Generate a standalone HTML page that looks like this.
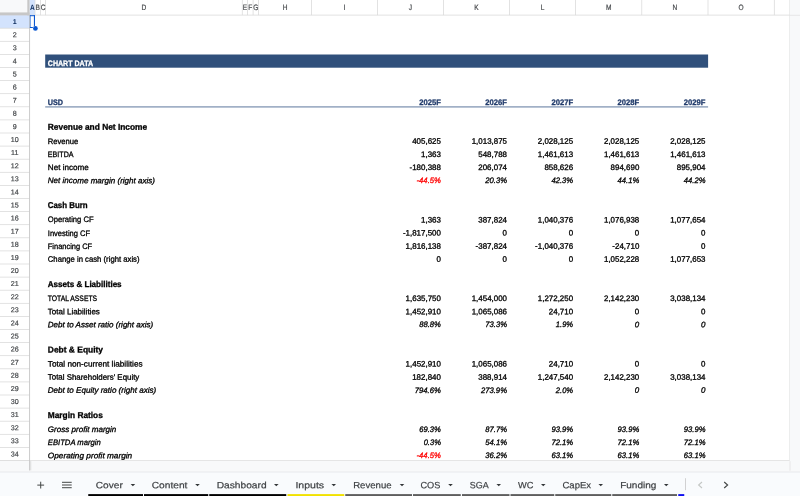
<!DOCTYPE html>
<html lang="en"><head><meta charset="utf-8"><title>Chart Data</title>
<style>html,body{margin:0;padding:0;background:#fff;overflow:hidden}svg{display:block;will-change:transform}text{white-space:pre;text-rendering:geometricPrecision}</style>
</head><body>
<svg width="800" height="496" viewBox="0 0 800 496" font-family="'Liberation Sans', Arial, sans-serif">
<rect x="0" y="0" width="800" height="496" fill="#ffffff"/>
<rect x="789.6" y="0" width="10.399999999999977" height="472.0" fill="#f8f9fa"/>
<rect x="789.3000000000001" y="0" width="0.7" height="472.0" fill="#e6e6e6"/>
<rect x="789.6" y="14.799999999999999" width="10.399999999999977" height="0.9" fill="#e4e4e4"/>
<rect x="0" y="460.5" width="800" height="11.5" fill="#f8f9fa"/>
<rect x="0" y="472.0" width="800" height="24.0" fill="#f9fbfd"/>
<rect x="0" y="471.6" width="800" height="0.8" fill="#e3e5e8"/>
<rect x="0" y="15.1" width="29.6" height="13.1" fill="#d3e3fd"/>
<rect x="29.6" y="0" width="5.399999999999999" height="15.1" fill="#d3e3fd"/>
<rect x="0" y="27.82" width="29.6" height="0.75" fill="#d9d9d9"/>
<rect x="0" y="40.92" width="29.6" height="0.75" fill="#d9d9d9"/>
<rect x="0" y="54.02" width="29.6" height="0.75" fill="#d9d9d9"/>
<rect x="0" y="67.12" width="29.6" height="0.75" fill="#d9d9d9"/>
<rect x="0" y="80.22" width="29.6" height="0.75" fill="#d9d9d9"/>
<rect x="0" y="93.32" width="29.6" height="0.75" fill="#d9d9d9"/>
<rect x="0" y="106.42" width="29.6" height="0.75" fill="#d9d9d9"/>
<rect x="0" y="119.52" width="29.6" height="0.75" fill="#d9d9d9"/>
<rect x="0" y="132.62" width="29.6" height="0.75" fill="#d9d9d9"/>
<rect x="0" y="145.72" width="29.6" height="0.75" fill="#d9d9d9"/>
<rect x="0" y="158.82" width="29.6" height="0.75" fill="#d9d9d9"/>
<rect x="0" y="171.92" width="29.6" height="0.75" fill="#d9d9d9"/>
<rect x="0" y="185.02" width="29.6" height="0.75" fill="#d9d9d9"/>
<rect x="0" y="198.12" width="29.6" height="0.75" fill="#d9d9d9"/>
<rect x="0" y="211.22" width="29.6" height="0.75" fill="#d9d9d9"/>
<rect x="0" y="224.32" width="29.6" height="0.75" fill="#d9d9d9"/>
<rect x="0" y="237.42" width="29.6" height="0.75" fill="#d9d9d9"/>
<rect x="0" y="250.52" width="29.6" height="0.75" fill="#d9d9d9"/>
<rect x="0" y="263.62" width="29.6" height="0.75" fill="#d9d9d9"/>
<rect x="0" y="276.73" width="29.6" height="0.75" fill="#d9d9d9"/>
<rect x="0" y="289.82" width="29.6" height="0.75" fill="#d9d9d9"/>
<rect x="0" y="302.93" width="29.6" height="0.75" fill="#d9d9d9"/>
<rect x="0" y="316.03" width="29.6" height="0.75" fill="#d9d9d9"/>
<rect x="0" y="329.12" width="29.6" height="0.75" fill="#d9d9d9"/>
<rect x="0" y="342.23" width="29.6" height="0.75" fill="#d9d9d9"/>
<rect x="0" y="355.32" width="29.6" height="0.75" fill="#d9d9d9"/>
<rect x="0" y="368.43" width="29.6" height="0.75" fill="#d9d9d9"/>
<rect x="0" y="381.53" width="29.6" height="0.75" fill="#d9d9d9"/>
<rect x="0" y="394.62" width="29.6" height="0.75" fill="#d9d9d9"/>
<rect x="0" y="407.73" width="29.6" height="0.75" fill="#d9d9d9"/>
<rect x="0" y="420.82" width="29.6" height="0.75" fill="#d9d9d9"/>
<rect x="0" y="433.93" width="29.6" height="0.75" fill="#d9d9d9"/>
<rect x="0" y="447.03" width="29.6" height="0.75" fill="#d9d9d9"/>
<rect x="0" y="460.12" width="29.6" height="0.75" fill="#d9d9d9"/>
<rect x="0" y="460.12" width="789.6" height="0.75" fill="#dedede"/>
<rect x="29.6" y="14.72" width="760.0" height="0.75" fill="#d9d9d9"/>
<rect x="34.62" y="0" width="0.75" height="15.1" fill="#d9d9d9"/>
<rect x="40.02" y="0" width="0.75" height="15.1" fill="#d9d9d9"/>
<rect x="45.23" y="0" width="0.75" height="15.1" fill="#d9d9d9"/>
<rect x="241.88" y="0" width="0.75" height="15.1" fill="#d9d9d9"/>
<rect x="247.22" y="0" width="0.75" height="15.1" fill="#d9d9d9"/>
<rect x="252.72" y="0" width="0.75" height="15.1" fill="#d9d9d9"/>
<rect x="258.12" y="0" width="0.75" height="15.1" fill="#d9d9d9"/>
<rect x="311.12" y="0" width="0.75" height="15.1" fill="#d9d9d9"/>
<rect x="377.02" y="0" width="0.75" height="15.1" fill="#d9d9d9"/>
<rect x="443.02" y="0" width="0.75" height="15.1" fill="#d9d9d9"/>
<rect x="509.12" y="0" width="0.75" height="15.1" fill="#d9d9d9"/>
<rect x="575.23" y="0" width="0.75" height="15.1" fill="#d9d9d9"/>
<rect x="641.42" y="0" width="0.75" height="15.1" fill="#d9d9d9"/>
<rect x="707.62" y="0" width="0.75" height="15.1" fill="#d9d9d9"/>
<rect x="773.92" y="0" width="0.75" height="15.1" fill="#d9d9d9"/>
<rect x="29.15" y="15.1" width="0.9" height="455.40" fill="#c6c6c6"/>
<rect x="0" y="0" width="27.3" height="12.4" fill="#f8f9fa"/>
<rect x="27.3" y="0" width="2.3" height="15.4" fill="#c7c7c7"/>
<rect x="0" y="12.4" width="29.6" height="3.00" fill="#c7c7c7"/>
<text x="32.40" y="9.7" transform="matrix(1 0.0005 0 1 0 -0.0161)" font-size="7.8" font-weight="bold" fill="#0a2a5c" text-anchor="middle" textLength="4.74" lengthAdjust="spacingAndGlyphs">A</text>
<text x="37.70" y="9.7" transform="matrix(1 0.0005 0 1 0 -0.0189)" font-size="7.8" fill="#45484b" stroke="#45484b" stroke-width="0.2" text-anchor="middle" textLength="4.38" lengthAdjust="spacingAndGlyphs">B</text>
<text x="43.00" y="9.7" transform="matrix(1 0.0005 0 1 0 -0.0215)" font-size="7.8" fill="#45484b" stroke="#45484b" stroke-width="0.2" text-anchor="middle" textLength="4.74" lengthAdjust="spacingAndGlyphs">C</text>
<text x="143.93" y="9.7" transform="matrix(1 0.0005 0 1 0 -0.0720)" font-size="7.8" fill="#45484b" stroke="#45484b" stroke-width="0.2" text-anchor="middle" textLength="4.74" lengthAdjust="spacingAndGlyphs">D</text>
<text x="244.93" y="9.7" transform="matrix(1 0.0005 0 1 0 -0.1225)" font-size="7.8" fill="#45484b" stroke="#45484b" stroke-width="0.2" text-anchor="middle" textLength="4.38" lengthAdjust="spacingAndGlyphs">E</text>
<text x="250.35" y="9.7" transform="matrix(1 0.0005 0 1 0 -0.1252)" font-size="7.8" fill="#45484b" stroke="#45484b" stroke-width="0.2" text-anchor="middle" textLength="4.01" lengthAdjust="spacingAndGlyphs">F</text>
<text x="255.80" y="9.7" transform="matrix(1 0.0005 0 1 0 -0.1279)" font-size="7.8" fill="#45484b" stroke="#45484b" stroke-width="0.2" text-anchor="middle" textLength="5.11" lengthAdjust="spacingAndGlyphs">G</text>
<text x="285.00" y="9.7" transform="matrix(1 0.0005 0 1 0 -0.1425)" font-size="7.8" fill="#45484b" stroke="#45484b" stroke-width="0.2" text-anchor="middle" textLength="4.74" lengthAdjust="spacingAndGlyphs">H</text>
<text x="344.45" y="9.7" transform="matrix(1 0.0005 0 1 0 -0.1722)" font-size="7.8" fill="#45484b" stroke="#45484b" stroke-width="0.2" text-anchor="middle" textLength="1.83" lengthAdjust="spacingAndGlyphs">I</text>
<text x="410.40" y="9.7" transform="matrix(1 0.0005 0 1 0 -0.2052)" font-size="7.8" fill="#45484b" stroke="#45484b" stroke-width="0.2" text-anchor="middle" textLength="3.29" lengthAdjust="spacingAndGlyphs">J</text>
<text x="476.45" y="9.7" transform="matrix(1 0.0005 0 1 0 -0.2382)" font-size="7.8" fill="#45484b" stroke="#45484b" stroke-width="0.2" text-anchor="middle" textLength="4.38" lengthAdjust="spacingAndGlyphs">K</text>
<text x="542.55" y="9.7" transform="matrix(1 0.0005 0 1 0 -0.2713)" font-size="7.8" fill="#45484b" stroke="#45484b" stroke-width="0.2" text-anchor="middle" textLength="3.65" lengthAdjust="spacingAndGlyphs">L</text>
<text x="608.70" y="9.7" transform="matrix(1 0.0005 0 1 0 -0.3044)" font-size="7.8" fill="#45484b" stroke="#45484b" stroke-width="0.2" text-anchor="middle" textLength="5.47" lengthAdjust="spacingAndGlyphs">M</text>
<text x="674.90" y="9.7" transform="matrix(1 0.0005 0 1 0 -0.3374)" font-size="7.8" fill="#45484b" stroke="#45484b" stroke-width="0.2" text-anchor="middle" textLength="4.74" lengthAdjust="spacingAndGlyphs">N</text>
<text x="741.15" y="9.7" transform="matrix(1 0.0005 0 1 0 -0.3706)" font-size="7.8" fill="#45484b" stroke="#45484b" stroke-width="0.2" text-anchor="middle" textLength="5.11" lengthAdjust="spacingAndGlyphs">O</text>
<text x="14.7" y="24.10" transform="matrix(1 0.0005 0 1 0 -0.0073)" font-size="7.1" font-weight="bold" fill="#0a2a5c" text-anchor="middle">1</text>
<text x="14.7" y="37.20" transform="matrix(1 0.0005 0 1 0 -0.0073)" font-size="7.1" fill="#45484b" stroke="#45484b" stroke-width="0.2" text-anchor="middle">2</text>
<text x="14.7" y="50.30" transform="matrix(1 0.0005 0 1 0 -0.0073)" font-size="7.1" fill="#45484b" stroke="#45484b" stroke-width="0.2" text-anchor="middle">3</text>
<text x="14.7" y="63.40" transform="matrix(1 0.0005 0 1 0 -0.0073)" font-size="7.1" fill="#45484b" stroke="#45484b" stroke-width="0.2" text-anchor="middle">4</text>
<text x="14.7" y="76.50" transform="matrix(1 0.0005 0 1 0 -0.0073)" font-size="7.1" fill="#45484b" stroke="#45484b" stroke-width="0.2" text-anchor="middle">5</text>
<text x="14.7" y="89.60" transform="matrix(1 0.0005 0 1 0 -0.0073)" font-size="7.1" fill="#45484b" stroke="#45484b" stroke-width="0.2" text-anchor="middle">6</text>
<text x="14.7" y="102.70" transform="matrix(1 0.0005 0 1 0 -0.0073)" font-size="7.1" fill="#45484b" stroke="#45484b" stroke-width="0.2" text-anchor="middle">7</text>
<text x="14.7" y="115.80" transform="matrix(1 0.0005 0 1 0 -0.0073)" font-size="7.1" fill="#45484b" stroke="#45484b" stroke-width="0.2" text-anchor="middle">8</text>
<text x="14.7" y="128.90" transform="matrix(1 0.0005 0 1 0 -0.0073)" font-size="7.1" fill="#45484b" stroke="#45484b" stroke-width="0.2" text-anchor="middle">9</text>
<text x="14.7" y="142.00" transform="matrix(1 0.0005 0 1 0 -0.0073)" font-size="7.1" fill="#45484b" stroke="#45484b" stroke-width="0.2" text-anchor="middle">10</text>
<text x="14.7" y="155.10" transform="matrix(1 0.0005 0 1 0 -0.0073)" font-size="7.1" fill="#45484b" stroke="#45484b" stroke-width="0.2" text-anchor="middle">11</text>
<text x="14.7" y="168.20" transform="matrix(1 0.0005 0 1 0 -0.0073)" font-size="7.1" fill="#45484b" stroke="#45484b" stroke-width="0.2" text-anchor="middle">12</text>
<text x="14.7" y="181.30" transform="matrix(1 0.0005 0 1 0 -0.0073)" font-size="7.1" fill="#45484b" stroke="#45484b" stroke-width="0.2" text-anchor="middle">13</text>
<text x="14.7" y="194.40" transform="matrix(1 0.0005 0 1 0 -0.0073)" font-size="7.1" fill="#45484b" stroke="#45484b" stroke-width="0.2" text-anchor="middle">14</text>
<text x="14.7" y="207.50" transform="matrix(1 0.0005 0 1 0 -0.0073)" font-size="7.1" fill="#45484b" stroke="#45484b" stroke-width="0.2" text-anchor="middle">15</text>
<text x="14.7" y="220.60" transform="matrix(1 0.0005 0 1 0 -0.0073)" font-size="7.1" fill="#45484b" stroke="#45484b" stroke-width="0.2" text-anchor="middle">16</text>
<text x="14.7" y="233.70" transform="matrix(1 0.0005 0 1 0 -0.0073)" font-size="7.1" fill="#45484b" stroke="#45484b" stroke-width="0.2" text-anchor="middle">17</text>
<text x="14.7" y="246.80" transform="matrix(1 0.0005 0 1 0 -0.0073)" font-size="7.1" fill="#45484b" stroke="#45484b" stroke-width="0.2" text-anchor="middle">18</text>
<text x="14.7" y="259.90" transform="matrix(1 0.0005 0 1 0 -0.0073)" font-size="7.1" fill="#45484b" stroke="#45484b" stroke-width="0.2" text-anchor="middle">19</text>
<text x="14.7" y="273.00" transform="matrix(1 0.0005 0 1 0 -0.0073)" font-size="7.1" fill="#45484b" stroke="#45484b" stroke-width="0.2" text-anchor="middle">20</text>
<text x="14.7" y="286.10" transform="matrix(1 0.0005 0 1 0 -0.0073)" font-size="7.1" fill="#45484b" stroke="#45484b" stroke-width="0.2" text-anchor="middle">21</text>
<text x="14.7" y="299.20" transform="matrix(1 0.0005 0 1 0 -0.0073)" font-size="7.1" fill="#45484b" stroke="#45484b" stroke-width="0.2" text-anchor="middle">22</text>
<text x="14.7" y="312.30" transform="matrix(1 0.0005 0 1 0 -0.0073)" font-size="7.1" fill="#45484b" stroke="#45484b" stroke-width="0.2" text-anchor="middle">23</text>
<text x="14.7" y="325.40" transform="matrix(1 0.0005 0 1 0 -0.0073)" font-size="7.1" fill="#45484b" stroke="#45484b" stroke-width="0.2" text-anchor="middle">24</text>
<text x="14.7" y="338.50" transform="matrix(1 0.0005 0 1 0 -0.0073)" font-size="7.1" fill="#45484b" stroke="#45484b" stroke-width="0.2" text-anchor="middle">25</text>
<text x="14.7" y="351.60" transform="matrix(1 0.0005 0 1 0 -0.0073)" font-size="7.1" fill="#45484b" stroke="#45484b" stroke-width="0.2" text-anchor="middle">26</text>
<text x="14.7" y="364.70" transform="matrix(1 0.0005 0 1 0 -0.0073)" font-size="7.1" fill="#45484b" stroke="#45484b" stroke-width="0.2" text-anchor="middle">27</text>
<text x="14.7" y="377.80" transform="matrix(1 0.0005 0 1 0 -0.0073)" font-size="7.1" fill="#45484b" stroke="#45484b" stroke-width="0.2" text-anchor="middle">28</text>
<text x="14.7" y="390.90" transform="matrix(1 0.0005 0 1 0 -0.0073)" font-size="7.1" fill="#45484b" stroke="#45484b" stroke-width="0.2" text-anchor="middle">29</text>
<text x="14.7" y="404.00" transform="matrix(1 0.0005 0 1 0 -0.0073)" font-size="7.1" fill="#45484b" stroke="#45484b" stroke-width="0.2" text-anchor="middle">30</text>
<text x="14.7" y="417.10" transform="matrix(1 0.0005 0 1 0 -0.0073)" font-size="7.1" fill="#45484b" stroke="#45484b" stroke-width="0.2" text-anchor="middle">31</text>
<text x="14.7" y="430.20" transform="matrix(1 0.0005 0 1 0 -0.0073)" font-size="7.1" fill="#45484b" stroke="#45484b" stroke-width="0.2" text-anchor="middle">32</text>
<text x="14.7" y="443.30" transform="matrix(1 0.0005 0 1 0 -0.0073)" font-size="7.1" fill="#45484b" stroke="#45484b" stroke-width="0.2" text-anchor="middle">33</text>
<text x="14.7" y="456.40" transform="matrix(1 0.0005 0 1 0 -0.0073)" font-size="7.1" fill="#45484b" stroke="#45484b" stroke-width="0.2" text-anchor="middle">34</text>
<rect x="45.2" y="54.50" width="662.90" height="13.20" fill="#30507b"/>
<rect x="45.2" y="106.25" width="662.90" height="1.3" fill="#8296b4"/>
<text x="47.80" y="65.55" transform="matrix(1 0.0005 0 1 0 -0.0352)" font-size="7.9" fill="#fff" stroke="#fff" stroke-width="0.3" textLength="45.32" lengthAdjust="spacingAndGlyphs" font-weight="bold">CHART DATA</text>
<text x="47.80" y="104.55" transform="matrix(1 0.0005 0 1 0 -0.0277)" font-size="7.9" fill="#223c6c" stroke="#223c6c" stroke-width="0.3" textLength="15.31" lengthAdjust="spacingAndGlyphs" font-weight="bold">USD</text>
<text x="440.90" y="104.55" transform="matrix(1 0.0005 0 1 0 -0.2150)" font-size="7.9" fill="#223c6c" stroke="#223c6c" stroke-width="0.3" textLength="21.68" lengthAdjust="spacingAndGlyphs" font-weight="bold" text-anchor="end">2025F</text>
<text x="507.00" y="104.55" transform="matrix(1 0.0005 0 1 0 -0.2481)" font-size="7.9" fill="#223c6c" stroke="#223c6c" stroke-width="0.3" textLength="21.68" lengthAdjust="spacingAndGlyphs" font-weight="bold" text-anchor="end">2026F</text>
<text x="573.10" y="104.55" transform="matrix(1 0.0005 0 1 0 -0.2811)" font-size="7.9" fill="#223c6c" stroke="#223c6c" stroke-width="0.3" textLength="21.68" lengthAdjust="spacingAndGlyphs" font-weight="bold" text-anchor="end">2027F</text>
<text x="639.30" y="104.55" transform="matrix(1 0.0005 0 1 0 -0.3142)" font-size="7.9" fill="#223c6c" stroke="#223c6c" stroke-width="0.3" textLength="21.68" lengthAdjust="spacingAndGlyphs" font-weight="bold" text-anchor="end">2028F</text>
<text x="705.50" y="104.55" transform="matrix(1 0.0005 0 1 0 -0.3473)" font-size="7.9" fill="#223c6c" stroke="#223c6c" stroke-width="0.3" textLength="21.68" lengthAdjust="spacingAndGlyphs" font-weight="bold" text-anchor="end">2029F</text>
<text x="47.80" y="129.75" transform="matrix(1 0.0005 0 1 0 -0.0488)" font-size="8.55" fill="#000" stroke="#000" stroke-width="0.3" textLength="99.41" lengthAdjust="spacingAndGlyphs" font-weight="bold">Revenue and Net Income</text>
<text x="47.80" y="143.85" transform="matrix(1 0.0005 0 1 0 -0.0315)" font-size="7.9" fill="#000" stroke="#000" stroke-width="0.3" textLength="30.57" lengthAdjust="spacingAndGlyphs">Revenue</text>
<text x="440.90" y="143.85" transform="matrix(1 0.0005 0 1 0 -0.2133)" font-size="7.9" fill="#000" stroke="#000" stroke-width="0.3" textLength="28.69" lengthAdjust="spacingAndGlyphs" text-anchor="end">405,625</text>
<text x="507.00" y="143.85" transform="matrix(1 0.0005 0 1 0 -0.2447)" font-size="7.9" fill="#000" stroke="#000" stroke-width="0.3" textLength="35.29" lengthAdjust="spacingAndGlyphs" text-anchor="end">1,013,875</text>
<text x="573.10" y="143.85" transform="matrix(1 0.0005 0 1 0 -0.2777)" font-size="7.9" fill="#000" stroke="#000" stroke-width="0.3" textLength="35.29" lengthAdjust="spacingAndGlyphs" text-anchor="end">2,028,125</text>
<text x="639.30" y="143.85" transform="matrix(1 0.0005 0 1 0 -0.3108)" font-size="7.9" fill="#000" stroke="#000" stroke-width="0.3" textLength="35.29" lengthAdjust="spacingAndGlyphs" text-anchor="end">2,028,125</text>
<text x="705.50" y="143.85" transform="matrix(1 0.0005 0 1 0 -0.3439)" font-size="7.9" fill="#000" stroke="#000" stroke-width="0.3" textLength="35.29" lengthAdjust="spacingAndGlyphs" text-anchor="end">2,028,125</text>
<text x="47.80" y="156.95" transform="matrix(1 0.0005 0 1 0 -0.0303)" font-size="7.9" fill="#000" stroke="#000" stroke-width="0.3" textLength="25.73" lengthAdjust="spacingAndGlyphs">EBITDA</text>
<text x="440.90" y="156.95" transform="matrix(1 0.0005 0 1 0 -0.2155)" font-size="7.9" fill="#000" stroke="#000" stroke-width="0.3" textLength="19.85" lengthAdjust="spacingAndGlyphs" text-anchor="end">1,363</text>
<text x="507.00" y="156.95" transform="matrix(1 0.0005 0 1 0 -0.2463)" font-size="7.9" fill="#000" stroke="#000" stroke-width="0.3" textLength="28.69" lengthAdjust="spacingAndGlyphs" text-anchor="end">548,788</text>
<text x="573.10" y="156.95" transform="matrix(1 0.0005 0 1 0 -0.2777)" font-size="7.9" fill="#000" stroke="#000" stroke-width="0.3" textLength="35.29" lengthAdjust="spacingAndGlyphs" text-anchor="end">1,461,613</text>
<text x="639.30" y="156.95" transform="matrix(1 0.0005 0 1 0 -0.3108)" font-size="7.9" fill="#000" stroke="#000" stroke-width="0.3" textLength="35.29" lengthAdjust="spacingAndGlyphs" text-anchor="end">1,461,613</text>
<text x="705.50" y="156.95" transform="matrix(1 0.0005 0 1 0 -0.3439)" font-size="7.9" fill="#000" stroke="#000" stroke-width="0.3" textLength="35.29" lengthAdjust="spacingAndGlyphs" text-anchor="end">1,461,613</text>
<text x="47.80" y="170.05" transform="matrix(1 0.0005 0 1 0 -0.0341)" font-size="7.9" fill="#000" stroke="#000" stroke-width="0.3" textLength="40.91" lengthAdjust="spacingAndGlyphs">Net income</text>
<text x="440.90" y="170.05" transform="matrix(1 0.0005 0 1 0 -0.2126)" font-size="7.9" fill="#000" stroke="#000" stroke-width="0.3" textLength="31.36" lengthAdjust="spacingAndGlyphs" text-anchor="end">-180,388</text>
<text x="507.00" y="170.05" transform="matrix(1 0.0005 0 1 0 -0.2463)" font-size="7.9" fill="#000" stroke="#000" stroke-width="0.3" textLength="28.69" lengthAdjust="spacingAndGlyphs" text-anchor="end">206,074</text>
<text x="573.10" y="170.05" transform="matrix(1 0.0005 0 1 0 -0.2794)" font-size="7.9" fill="#000" stroke="#000" stroke-width="0.3" textLength="28.69" lengthAdjust="spacingAndGlyphs" text-anchor="end">858,626</text>
<text x="639.30" y="170.05" transform="matrix(1 0.0005 0 1 0 -0.3125)" font-size="7.9" fill="#000" stroke="#000" stroke-width="0.3" textLength="28.69" lengthAdjust="spacingAndGlyphs" text-anchor="end">894,690</text>
<text x="705.50" y="170.05" transform="matrix(1 0.0005 0 1 0 -0.3456)" font-size="7.9" fill="#000" stroke="#000" stroke-width="0.3" textLength="28.69" lengthAdjust="spacingAndGlyphs" text-anchor="end">895,904</text>
<text x="47.80" y="183.15" transform="matrix(1 0.0005 0 1 0 -0.0507)" font-size="7.9" fill="#000" stroke="#000" stroke-width="0.3" textLength="107.20" lengthAdjust="spacingAndGlyphs" font-style="italic">Net income margin (right axis)</text>
<text x="440.90" y="183.15" transform="matrix(1 0.0005 0 1 0 -0.2144)" font-size="7.9" fill="#ff0000" stroke="#ff0000" stroke-width="0.3" textLength="24.36" lengthAdjust="spacingAndGlyphs" font-style="italic" text-anchor="end">-44.5%</text>
<text x="507.00" y="183.15" transform="matrix(1 0.0005 0 1 0 -0.2481)" font-size="7.9" fill="#000" stroke="#000" stroke-width="0.3" textLength="21.69" lengthAdjust="spacingAndGlyphs" font-style="italic" text-anchor="end">20.3%</text>
<text x="573.10" y="183.15" transform="matrix(1 0.0005 0 1 0 -0.2811)" font-size="7.9" fill="#000" stroke="#000" stroke-width="0.3" textLength="21.69" lengthAdjust="spacingAndGlyphs" font-style="italic" text-anchor="end">42.3%</text>
<text x="639.30" y="183.15" transform="matrix(1 0.0005 0 1 0 -0.3142)" font-size="7.9" fill="#000" stroke="#000" stroke-width="0.3" textLength="21.69" lengthAdjust="spacingAndGlyphs" font-style="italic" text-anchor="end">44.1%</text>
<text x="705.50" y="183.15" transform="matrix(1 0.0005 0 1 0 -0.3473)" font-size="7.9" fill="#000" stroke="#000" stroke-width="0.3" textLength="21.69" lengthAdjust="spacingAndGlyphs" font-style="italic" text-anchor="end">44.2%</text>
<text x="47.80" y="208.35" transform="matrix(1 0.0005 0 1 0 -0.0339)" font-size="8.55" fill="#000" stroke="#000" stroke-width="0.3" textLength="39.86" lengthAdjust="spacingAndGlyphs" font-weight="bold">Cash Burn</text>
<text x="47.80" y="222.45" transform="matrix(1 0.0005 0 1 0 -0.0354)" font-size="7.9" fill="#000" stroke="#000" stroke-width="0.3" textLength="45.82" lengthAdjust="spacingAndGlyphs">Operating CF</text>
<text x="440.90" y="222.45" transform="matrix(1 0.0005 0 1 0 -0.2155)" font-size="7.9" fill="#000" stroke="#000" stroke-width="0.3" textLength="19.85" lengthAdjust="spacingAndGlyphs" text-anchor="end">1,363</text>
<text x="507.00" y="222.45" transform="matrix(1 0.0005 0 1 0 -0.2463)" font-size="7.9" fill="#000" stroke="#000" stroke-width="0.3" textLength="28.69" lengthAdjust="spacingAndGlyphs" text-anchor="end">387,824</text>
<text x="573.10" y="222.45" transform="matrix(1 0.0005 0 1 0 -0.2777)" font-size="7.9" fill="#000" stroke="#000" stroke-width="0.3" textLength="35.29" lengthAdjust="spacingAndGlyphs" text-anchor="end">1,040,376</text>
<text x="639.30" y="222.45" transform="matrix(1 0.0005 0 1 0 -0.3108)" font-size="7.9" fill="#000" stroke="#000" stroke-width="0.3" textLength="35.29" lengthAdjust="spacingAndGlyphs" text-anchor="end">1,076,938</text>
<text x="705.50" y="222.45" transform="matrix(1 0.0005 0 1 0 -0.3439)" font-size="7.9" fill="#000" stroke="#000" stroke-width="0.3" textLength="35.29" lengthAdjust="spacingAndGlyphs" text-anchor="end">1,077,654</text>
<text x="47.80" y="235.55" transform="matrix(1 0.0005 0 1 0 -0.0345)" font-size="7.9" fill="#000" stroke="#000" stroke-width="0.3" textLength="42.31" lengthAdjust="spacingAndGlyphs">Investing CF</text>
<text x="440.90" y="235.55" transform="matrix(1 0.0005 0 1 0 -0.2110)" font-size="7.9" fill="#000" stroke="#000" stroke-width="0.3" textLength="37.96" lengthAdjust="spacingAndGlyphs" text-anchor="end">-1,817,500</text>
<text x="507.00" y="235.55" transform="matrix(1 0.0005 0 1 0 -0.2524)" font-size="7.9" fill="#000" stroke="#000" stroke-width="0.3" textLength="4.42" lengthAdjust="spacingAndGlyphs" text-anchor="end">0</text>
<text x="573.10" y="235.55" transform="matrix(1 0.0005 0 1 0 -0.2854)" font-size="7.9" fill="#000" stroke="#000" stroke-width="0.3" textLength="4.42" lengthAdjust="spacingAndGlyphs" text-anchor="end">0</text>
<text x="639.30" y="235.55" transform="matrix(1 0.0005 0 1 0 -0.3185)" font-size="7.9" fill="#000" stroke="#000" stroke-width="0.3" textLength="4.42" lengthAdjust="spacingAndGlyphs" text-anchor="end">0</text>
<text x="705.50" y="235.55" transform="matrix(1 0.0005 0 1 0 -0.3516)" font-size="7.9" fill="#000" stroke="#000" stroke-width="0.3" textLength="4.42" lengthAdjust="spacingAndGlyphs" text-anchor="end">0</text>
<text x="47.80" y="248.65" transform="matrix(1 0.0005 0 1 0 -0.0350)" font-size="7.9" fill="#000" stroke="#000" stroke-width="0.3" textLength="44.35" lengthAdjust="spacingAndGlyphs">Financing CF</text>
<text x="440.90" y="248.65" transform="matrix(1 0.0005 0 1 0 -0.2116)" font-size="7.9" fill="#000" stroke="#000" stroke-width="0.3" textLength="35.29" lengthAdjust="spacingAndGlyphs" text-anchor="end">1,816,138</text>
<text x="507.00" y="248.65" transform="matrix(1 0.0005 0 1 0 -0.2457)" font-size="7.9" fill="#000" stroke="#000" stroke-width="0.3" textLength="31.36" lengthAdjust="spacingAndGlyphs" text-anchor="end">-387,824</text>
<text x="573.10" y="248.65" transform="matrix(1 0.0005 0 1 0 -0.2771)" font-size="7.9" fill="#000" stroke="#000" stroke-width="0.3" textLength="37.96" lengthAdjust="spacingAndGlyphs" text-anchor="end">-1,040,376</text>
<text x="639.30" y="248.65" transform="matrix(1 0.0005 0 1 0 -0.3129)" font-size="7.9" fill="#000" stroke="#000" stroke-width="0.3" textLength="26.94" lengthAdjust="spacingAndGlyphs" text-anchor="end">-24,710</text>
<text x="705.50" y="248.65" transform="matrix(1 0.0005 0 1 0 -0.3516)" font-size="7.9" fill="#000" stroke="#000" stroke-width="0.3" textLength="4.42" lengthAdjust="spacingAndGlyphs" text-anchor="end">0</text>
<text x="47.80" y="261.75" transform="matrix(1 0.0005 0 1 0 -0.0468)" font-size="7.9" fill="#000" stroke="#000" stroke-width="0.3" textLength="91.75" lengthAdjust="spacingAndGlyphs">Change in cash (right axis)</text>
<text x="440.90" y="261.75" transform="matrix(1 0.0005 0 1 0 -0.2193)" font-size="7.9" fill="#000" stroke="#000" stroke-width="0.3" textLength="4.42" lengthAdjust="spacingAndGlyphs" text-anchor="end">0</text>
<text x="507.00" y="261.75" transform="matrix(1 0.0005 0 1 0 -0.2524)" font-size="7.9" fill="#000" stroke="#000" stroke-width="0.3" textLength="4.42" lengthAdjust="spacingAndGlyphs" text-anchor="end">0</text>
<text x="573.10" y="261.75" transform="matrix(1 0.0005 0 1 0 -0.2854)" font-size="7.9" fill="#000" stroke="#000" stroke-width="0.3" textLength="4.42" lengthAdjust="spacingAndGlyphs" text-anchor="end">0</text>
<text x="639.30" y="261.75" transform="matrix(1 0.0005 0 1 0 -0.3108)" font-size="7.9" fill="#000" stroke="#000" stroke-width="0.3" textLength="35.29" lengthAdjust="spacingAndGlyphs" text-anchor="end">1,052,228</text>
<text x="705.50" y="261.75" transform="matrix(1 0.0005 0 1 0 -0.3439)" font-size="7.9" fill="#000" stroke="#000" stroke-width="0.3" textLength="35.29" lengthAdjust="spacingAndGlyphs" text-anchor="end">1,077,653</text>
<text x="47.80" y="286.95" transform="matrix(1 0.0005 0 1 0 -0.0423)" font-size="8.55" fill="#000" stroke="#000" stroke-width="0.3" textLength="73.78" lengthAdjust="spacingAndGlyphs" font-weight="bold">Assets &amp; Liabilities</text>
<text x="47.80" y="301.05" transform="matrix(1 0.0005 0 1 0 -0.0362)" font-size="7.9" fill="#000" stroke="#000" stroke-width="0.3" textLength="49.32" lengthAdjust="spacingAndGlyphs">TOTAL ASSETS</text>
<text x="440.90" y="301.05" transform="matrix(1 0.0005 0 1 0 -0.2116)" font-size="7.9" fill="#000" stroke="#000" stroke-width="0.3" textLength="35.29" lengthAdjust="spacingAndGlyphs" text-anchor="end">1,635,750</text>
<text x="507.00" y="301.05" transform="matrix(1 0.0005 0 1 0 -0.2447)" font-size="7.9" fill="#000" stroke="#000" stroke-width="0.3" textLength="35.29" lengthAdjust="spacingAndGlyphs" text-anchor="end">1,454,000</text>
<text x="573.10" y="301.05" transform="matrix(1 0.0005 0 1 0 -0.2777)" font-size="7.9" fill="#000" stroke="#000" stroke-width="0.3" textLength="35.29" lengthAdjust="spacingAndGlyphs" text-anchor="end">1,272,250</text>
<text x="639.30" y="301.05" transform="matrix(1 0.0005 0 1 0 -0.3108)" font-size="7.9" fill="#000" stroke="#000" stroke-width="0.3" textLength="35.29" lengthAdjust="spacingAndGlyphs" text-anchor="end">2,142,230</text>
<text x="705.50" y="301.05" transform="matrix(1 0.0005 0 1 0 -0.3439)" font-size="7.9" fill="#000" stroke="#000" stroke-width="0.3" textLength="35.29" lengthAdjust="spacingAndGlyphs" text-anchor="end">3,038,134</text>
<text x="47.80" y="314.15" transform="matrix(1 0.0005 0 1 0 -0.0369)" font-size="7.9" fill="#000" stroke="#000" stroke-width="0.3" textLength="52.07" lengthAdjust="spacingAndGlyphs">Total Liabilities</text>
<text x="440.90" y="314.15" transform="matrix(1 0.0005 0 1 0 -0.2116)" font-size="7.9" fill="#000" stroke="#000" stroke-width="0.3" textLength="35.29" lengthAdjust="spacingAndGlyphs" text-anchor="end">1,452,910</text>
<text x="507.00" y="314.15" transform="matrix(1 0.0005 0 1 0 -0.2447)" font-size="7.9" fill="#000" stroke="#000" stroke-width="0.3" textLength="35.29" lengthAdjust="spacingAndGlyphs" text-anchor="end">1,065,086</text>
<text x="573.10" y="314.15" transform="matrix(1 0.0005 0 1 0 -0.2805)" font-size="7.9" fill="#000" stroke="#000" stroke-width="0.3" textLength="24.27" lengthAdjust="spacingAndGlyphs" text-anchor="end">24,710</text>
<text x="639.30" y="314.15" transform="matrix(1 0.0005 0 1 0 -0.3185)" font-size="7.9" fill="#000" stroke="#000" stroke-width="0.3" textLength="4.42" lengthAdjust="spacingAndGlyphs" text-anchor="end">0</text>
<text x="705.50" y="314.15" transform="matrix(1 0.0005 0 1 0 -0.3516)" font-size="7.9" fill="#000" stroke="#000" stroke-width="0.3" textLength="4.42" lengthAdjust="spacingAndGlyphs" text-anchor="end">0</text>
<text x="47.80" y="327.25" transform="matrix(1 0.0005 0 1 0 -0.0503)" font-size="7.9" fill="#000" stroke="#000" stroke-width="0.3" textLength="105.45" lengthAdjust="spacingAndGlyphs" font-style="italic">Debt to Asset ratio (right axis)</text>
<text x="440.90" y="327.25" transform="matrix(1 0.0005 0 1 0 -0.2150)" font-size="7.9" fill="#000" stroke="#000" stroke-width="0.3" textLength="21.69" lengthAdjust="spacingAndGlyphs" font-style="italic" text-anchor="end">88.8%</text>
<text x="507.00" y="327.25" transform="matrix(1 0.0005 0 1 0 -0.2481)" font-size="7.9" fill="#000" stroke="#000" stroke-width="0.3" textLength="21.69" lengthAdjust="spacingAndGlyphs" font-style="italic" text-anchor="end">73.3%</text>
<text x="573.10" y="327.25" transform="matrix(1 0.0005 0 1 0 -0.2822)" font-size="7.9" fill="#000" stroke="#000" stroke-width="0.3" textLength="17.27" lengthAdjust="spacingAndGlyphs" font-style="italic" text-anchor="end">1.9%</text>
<text x="639.30" y="327.25" transform="matrix(1 0.0005 0 1 0 -0.3185)" font-size="7.9" fill="#000" stroke="#000" stroke-width="0.3" textLength="4.42" lengthAdjust="spacingAndGlyphs" font-style="italic" text-anchor="end">0</text>
<text x="705.50" y="327.25" transform="matrix(1 0.0005 0 1 0 -0.3516)" font-size="7.9" fill="#000" stroke="#000" stroke-width="0.3" textLength="4.42" lengthAdjust="spacingAndGlyphs" font-style="italic" text-anchor="end">0</text>
<text x="47.80" y="352.45" transform="matrix(1 0.0005 0 1 0 -0.0377)" font-size="8.55" fill="#000" stroke="#000" stroke-width="0.3" textLength="55.22" lengthAdjust="spacingAndGlyphs" font-weight="bold">Debt &amp; Equity</text>
<text x="47.80" y="366.55" transform="matrix(1 0.0005 0 1 0 -0.0476)" font-size="7.9" fill="#000" stroke="#000" stroke-width="0.3" textLength="94.81" lengthAdjust="spacingAndGlyphs">Total non-current liabilities</text>
<text x="440.90" y="366.55" transform="matrix(1 0.0005 0 1 0 -0.2116)" font-size="7.9" fill="#000" stroke="#000" stroke-width="0.3" textLength="35.29" lengthAdjust="spacingAndGlyphs" text-anchor="end">1,452,910</text>
<text x="507.00" y="366.55" transform="matrix(1 0.0005 0 1 0 -0.2447)" font-size="7.9" fill="#000" stroke="#000" stroke-width="0.3" textLength="35.29" lengthAdjust="spacingAndGlyphs" text-anchor="end">1,065,086</text>
<text x="573.10" y="366.55" transform="matrix(1 0.0005 0 1 0 -0.2805)" font-size="7.9" fill="#000" stroke="#000" stroke-width="0.3" textLength="24.27" lengthAdjust="spacingAndGlyphs" text-anchor="end">24,710</text>
<text x="639.30" y="366.55" transform="matrix(1 0.0005 0 1 0 -0.3185)" font-size="7.9" fill="#000" stroke="#000" stroke-width="0.3" textLength="4.42" lengthAdjust="spacingAndGlyphs" text-anchor="end">0</text>
<text x="705.50" y="366.55" transform="matrix(1 0.0005 0 1 0 -0.3516)" font-size="7.9" fill="#000" stroke="#000" stroke-width="0.3" textLength="4.42" lengthAdjust="spacingAndGlyphs" text-anchor="end">0</text>
<text x="47.80" y="379.65" transform="matrix(1 0.0005 0 1 0 -0.0468)" font-size="7.9" fill="#000" stroke="#000" stroke-width="0.3" textLength="91.53" lengthAdjust="spacingAndGlyphs">Total Shareholders' Equity</text>
<text x="440.90" y="379.65" transform="matrix(1 0.0005 0 1 0 -0.2133)" font-size="7.9" fill="#000" stroke="#000" stroke-width="0.3" textLength="28.69" lengthAdjust="spacingAndGlyphs" text-anchor="end">182,840</text>
<text x="507.00" y="379.65" transform="matrix(1 0.0005 0 1 0 -0.2463)" font-size="7.9" fill="#000" stroke="#000" stroke-width="0.3" textLength="28.69" lengthAdjust="spacingAndGlyphs" text-anchor="end">388,914</text>
<text x="573.10" y="379.65" transform="matrix(1 0.0005 0 1 0 -0.2777)" font-size="7.9" fill="#000" stroke="#000" stroke-width="0.3" textLength="35.29" lengthAdjust="spacingAndGlyphs" text-anchor="end">1,247,540</text>
<text x="639.30" y="379.65" transform="matrix(1 0.0005 0 1 0 -0.3108)" font-size="7.9" fill="#000" stroke="#000" stroke-width="0.3" textLength="35.29" lengthAdjust="spacingAndGlyphs" text-anchor="end">2,142,230</text>
<text x="705.50" y="379.65" transform="matrix(1 0.0005 0 1 0 -0.3439)" font-size="7.9" fill="#000" stroke="#000" stroke-width="0.3" textLength="35.29" lengthAdjust="spacingAndGlyphs" text-anchor="end">3,038,134</text>
<text x="47.80" y="392.75" transform="matrix(1 0.0005 0 1 0 -0.0510)" font-size="7.9" fill="#000" stroke="#000" stroke-width="0.3" textLength="108.47" lengthAdjust="spacingAndGlyphs" font-style="italic">Debt to Equity ratio (right axis)</text>
<text x="440.90" y="392.75" transform="matrix(1 0.0005 0 1 0 -0.2139)" font-size="7.9" fill="#000" stroke="#000" stroke-width="0.3" textLength="26.11" lengthAdjust="spacingAndGlyphs" font-style="italic" text-anchor="end">794.6%</text>
<text x="507.00" y="392.75" transform="matrix(1 0.0005 0 1 0 -0.2470)" font-size="7.9" fill="#000" stroke="#000" stroke-width="0.3" textLength="26.11" lengthAdjust="spacingAndGlyphs" font-style="italic" text-anchor="end">273.9%</text>
<text x="573.10" y="392.75" transform="matrix(1 0.0005 0 1 0 -0.2822)" font-size="7.9" fill="#000" stroke="#000" stroke-width="0.3" textLength="17.27" lengthAdjust="spacingAndGlyphs" font-style="italic" text-anchor="end">2.0%</text>
<text x="639.30" y="392.75" transform="matrix(1 0.0005 0 1 0 -0.3185)" font-size="7.9" fill="#000" stroke="#000" stroke-width="0.3" textLength="4.42" lengthAdjust="spacingAndGlyphs" font-style="italic" text-anchor="end">0</text>
<text x="705.50" y="392.75" transform="matrix(1 0.0005 0 1 0 -0.3516)" font-size="7.9" fill="#000" stroke="#000" stroke-width="0.3" textLength="4.42" lengthAdjust="spacingAndGlyphs" font-style="italic" text-anchor="end">0</text>
<text x="47.80" y="417.95" transform="matrix(1 0.0005 0 1 0 -0.0377)" font-size="8.55" fill="#000" stroke="#000" stroke-width="0.3" textLength="55.04" lengthAdjust="spacingAndGlyphs" font-weight="bold">Margin Ratios</text>
<text x="47.80" y="432.05" transform="matrix(1 0.0005 0 1 0 -0.0410)" font-size="7.9" fill="#000" stroke="#000" stroke-width="0.3" textLength="68.52" lengthAdjust="spacingAndGlyphs" font-style="italic">Gross profit margin</text>
<text x="440.90" y="432.05" transform="matrix(1 0.0005 0 1 0 -0.2150)" font-size="7.9" fill="#000" stroke="#000" stroke-width="0.3" textLength="21.69" lengthAdjust="spacingAndGlyphs" font-style="italic" text-anchor="end">69.3%</text>
<text x="507.00" y="432.05" transform="matrix(1 0.0005 0 1 0 -0.2481)" font-size="7.9" fill="#000" stroke="#000" stroke-width="0.3" textLength="21.69" lengthAdjust="spacingAndGlyphs" font-style="italic" text-anchor="end">87.7%</text>
<text x="573.10" y="432.05" transform="matrix(1 0.0005 0 1 0 -0.2811)" font-size="7.9" fill="#000" stroke="#000" stroke-width="0.3" textLength="21.69" lengthAdjust="spacingAndGlyphs" font-style="italic" text-anchor="end">93.9%</text>
<text x="639.30" y="432.05" transform="matrix(1 0.0005 0 1 0 -0.3142)" font-size="7.9" fill="#000" stroke="#000" stroke-width="0.3" textLength="21.69" lengthAdjust="spacingAndGlyphs" font-style="italic" text-anchor="end">93.9%</text>
<text x="705.50" y="432.05" transform="matrix(1 0.0005 0 1 0 -0.3473)" font-size="7.9" fill="#000" stroke="#000" stroke-width="0.3" textLength="21.69" lengthAdjust="spacingAndGlyphs" font-style="italic" text-anchor="end">93.9%</text>
<text x="47.80" y="445.15" transform="matrix(1 0.0005 0 1 0 -0.0372)" font-size="7.9" fill="#000" stroke="#000" stroke-width="0.3" textLength="53.03" lengthAdjust="spacingAndGlyphs" font-style="italic">EBITDA margin</text>
<text x="440.90" y="445.15" transform="matrix(1 0.0005 0 1 0 -0.2161)" font-size="7.9" fill="#000" stroke="#000" stroke-width="0.3" textLength="17.27" lengthAdjust="spacingAndGlyphs" font-style="italic" text-anchor="end">0.3%</text>
<text x="507.00" y="445.15" transform="matrix(1 0.0005 0 1 0 -0.2481)" font-size="7.9" fill="#000" stroke="#000" stroke-width="0.3" textLength="21.69" lengthAdjust="spacingAndGlyphs" font-style="italic" text-anchor="end">54.1%</text>
<text x="573.10" y="445.15" transform="matrix(1 0.0005 0 1 0 -0.2811)" font-size="7.9" fill="#000" stroke="#000" stroke-width="0.3" textLength="21.69" lengthAdjust="spacingAndGlyphs" font-style="italic" text-anchor="end">72.1%</text>
<text x="639.30" y="445.15" transform="matrix(1 0.0005 0 1 0 -0.3142)" font-size="7.9" fill="#000" stroke="#000" stroke-width="0.3" textLength="21.69" lengthAdjust="spacingAndGlyphs" font-style="italic" text-anchor="end">72.1%</text>
<text x="705.50" y="445.15" transform="matrix(1 0.0005 0 1 0 -0.3473)" font-size="7.9" fill="#000" stroke="#000" stroke-width="0.3" textLength="21.69" lengthAdjust="spacingAndGlyphs" font-style="italic" text-anchor="end">72.1%</text>
<text x="47.80" y="458.25" transform="matrix(1 0.0005 0 1 0 -0.0450)" font-size="7.9" fill="#000" stroke="#000" stroke-width="0.3" textLength="84.42" lengthAdjust="spacingAndGlyphs" font-style="italic">Operating profit margin</text>
<text x="440.90" y="458.25" transform="matrix(1 0.0005 0 1 0 -0.2144)" font-size="7.9" fill="#ff0000" stroke="#ff0000" stroke-width="0.3" textLength="24.36" lengthAdjust="spacingAndGlyphs" font-style="italic" text-anchor="end">-44.5%</text>
<text x="507.00" y="458.25" transform="matrix(1 0.0005 0 1 0 -0.2481)" font-size="7.9" fill="#000" stroke="#000" stroke-width="0.3" textLength="21.69" lengthAdjust="spacingAndGlyphs" font-style="italic" text-anchor="end">36.2%</text>
<text x="573.10" y="458.25" transform="matrix(1 0.0005 0 1 0 -0.2811)" font-size="7.9" fill="#000" stroke="#000" stroke-width="0.3" textLength="21.69" lengthAdjust="spacingAndGlyphs" font-style="italic" text-anchor="end">63.1%</text>
<text x="639.30" y="458.25" transform="matrix(1 0.0005 0 1 0 -0.3142)" font-size="7.9" fill="#000" stroke="#000" stroke-width="0.3" textLength="21.69" lengthAdjust="spacingAndGlyphs" font-style="italic" text-anchor="end">63.1%</text>
<text x="705.50" y="458.25" transform="matrix(1 0.0005 0 1 0 -0.3473)" font-size="7.9" fill="#000" stroke="#000" stroke-width="0.3" textLength="21.69" lengthAdjust="spacingAndGlyphs" font-style="italic" text-anchor="end">63.1%</text>
<rect x="29.90" y="15.20" width="5.10" height="1.0" fill="#0b57d0"/>
<rect x="29.90" y="27.00" width="5.10" height="1.0" fill="#0b57d0"/>
<rect x="33.90" y="15.20" width="1.1" height="12.80" fill="#0b57d0"/>
<rect x="29.90" y="15.20" width="0.6" height="12.80" fill="#0b57d0"/>
<circle cx="35.40" cy="28.40" r="2.7" fill="#fff"/>
<circle cx="35.40" cy="28.40" r="2.35" fill="#0b57d0"/>
<rect x="30.4" y="461.10" width="0.8" height="9.3" fill="#d4d4d4"/>
<rect x="789.6" y="461.10" width="0.8" height="9.6" fill="#e2e2e2"/>
<rect x="37.3" y="484.6" width="6.8" height="1.0" fill="#444746"/>
<rect x="40.2" y="481.70000000000005" width="1.0" height="6.8" fill="#444746"/>
<rect x="62.0" y="481.8" width="9.7" height="1.0" fill="#444746"/>
<rect x="62.0" y="484.5" width="9.7" height="1.0" fill="#444746"/>
<rect x="62.0" y="487.2" width="9.7" height="1.0" fill="#444746"/>
<rect x="88.25" y="494.1" width="54.75" height="1.9" fill="#000000"/>
<text x="95.80" y="488.3" transform="matrix(1 0.0005 0 1 0 -0.0546)" font-size="9.1" fill="#3f4245" stroke="#3f4245" stroke-width="0.2" textLength="27.00" lengthAdjust="spacingAndGlyphs">Cover</text>
<path d="M130.60 483.9 L135.20 483.9 L132.90 486.3 Z" fill="#333638"/>
<rect x="144.0" y="494.1" width="64.25" height="1.9" fill="#000000"/>
<text x="151.70" y="488.3" transform="matrix(1 0.0005 0 1 0 -0.0848)" font-size="9.1" fill="#3f4245" stroke="#3f4245" stroke-width="0.2" textLength="35.70" lengthAdjust="spacingAndGlyphs">Content</text>
<path d="M195.20 483.9 L199.80 483.9 L197.50 486.3 Z" fill="#333638"/>
<rect x="209.25" y="494.1" width="77.00" height="1.9" fill="#000000"/>
<text x="216.70" y="488.3" transform="matrix(1 0.0005 0 1 0 -0.1208)" font-size="9.1" fill="#3f4245" stroke="#3f4245" stroke-width="0.2" textLength="49.95" lengthAdjust="spacingAndGlyphs">Dashboard</text>
<path d="M274.00 483.9 L278.60 483.9 L276.30 486.3 Z" fill="#333638"/>
<rect x="287.5" y="494.1" width="56.75" height="1.9" fill="#f1e100"/>
<text x="295.45" y="488.3" transform="matrix(1 0.0005 0 1 0 -0.1549)" font-size="9.1" fill="#3f4245" stroke="#3f4245" stroke-width="0.2" textLength="28.70" lengthAdjust="spacingAndGlyphs">Inputs</text>
<path d="M331.45 483.9 L336.05 483.9 L333.75 486.3 Z" fill="#333638"/>
<rect x="345.25" y="494.1" width="66.75" height="1.9" fill="#5e5e5e"/>
<text x="353.20" y="488.3" transform="matrix(1 0.0005 0 1 0 -0.1862)" font-size="9.1" fill="#3f4245" stroke="#3f4245" stroke-width="0.2" textLength="38.45" lengthAdjust="spacingAndGlyphs">Revenue</text>
<path d="M399.70 483.9 L404.30 483.9 L402.00 486.3 Z" fill="#333638"/>
<rect x="413.0" y="494.1" width="47.75" height="1.9" fill="#5e5e5e"/>
<text x="420.45" y="488.3" transform="matrix(1 0.0005 0 1 0 -0.2152)" font-size="9.1" fill="#3f4245" stroke="#3f4245" stroke-width="0.2" textLength="19.95" lengthAdjust="spacingAndGlyphs">COS</text>
<path d="M448.20 483.9 L452.80 483.9 L450.50 486.3 Z" fill="#333638"/>
<rect x="462.0" y="494.1" width="47.50" height="1.9" fill="#5e5e5e"/>
<text x="469.70" y="488.3" transform="matrix(1 0.0005 0 1 0 -0.2396)" font-size="9.1" fill="#3f4245" stroke="#3f4245" stroke-width="0.2" textLength="18.95" lengthAdjust="spacingAndGlyphs">SGA</text>
<path d="M496.45 483.9 L501.05 483.9 L498.75 486.3 Z" fill="#333638"/>
<rect x="510.5" y="494.1" width="43.75" height="1.9" fill="#5e5e5e"/>
<text x="517.95" y="488.3" transform="matrix(1 0.0005 0 1 0 -0.2628)" font-size="9.1" fill="#3f4245" stroke="#3f4245" stroke-width="0.2" textLength="15.45" lengthAdjust="spacingAndGlyphs">WC</text>
<path d="M540.95 483.9 L545.55 483.9 L543.25 486.3 Z" fill="#333638"/>
<rect x="555.25" y="494.1" width="56.00" height="1.9" fill="#5e5e5e"/>
<text x="562.45" y="488.3" transform="matrix(1 0.0005 0 1 0 -0.2884)" font-size="9.1" fill="#3f4245" stroke="#3f4245" stroke-width="0.2" textLength="28.70" lengthAdjust="spacingAndGlyphs">CapEx</text>
<path d="M598.45 483.9 L603.05 483.9 L600.75 486.3 Z" fill="#333638"/>
<rect x="612.25" y="494.1" width="64.75" height="1.9" fill="#5e5e5e"/>
<text x="620.20" y="488.3" transform="matrix(1 0.0005 0 1 0 -0.3191)" font-size="9.1" fill="#3f4245" stroke="#3f4245" stroke-width="0.2" textLength="36.20" lengthAdjust="spacingAndGlyphs">Funding</text>
<path d="M663.95 483.9 L668.55 483.9 L666.25 486.3 Z" fill="#333638"/>
<rect x="678.25" y="494.1" width="6.0" height="1.9" fill="#1010f0"/>
<rect x="685.1" y="478.2" width="0.8" height="12" fill="#c7c7c7"/>
<path d="M702.0 482.0 L698.6 485.0 L702.0 488.0" fill="none" stroke="#c4c7c5" stroke-width="1.1"/>
<path d="M724.2 482.0 L727.6 485.0 L724.2 488.0" fill="none" stroke="#444746" stroke-width="1.15"/>
</svg>
</body></html>
